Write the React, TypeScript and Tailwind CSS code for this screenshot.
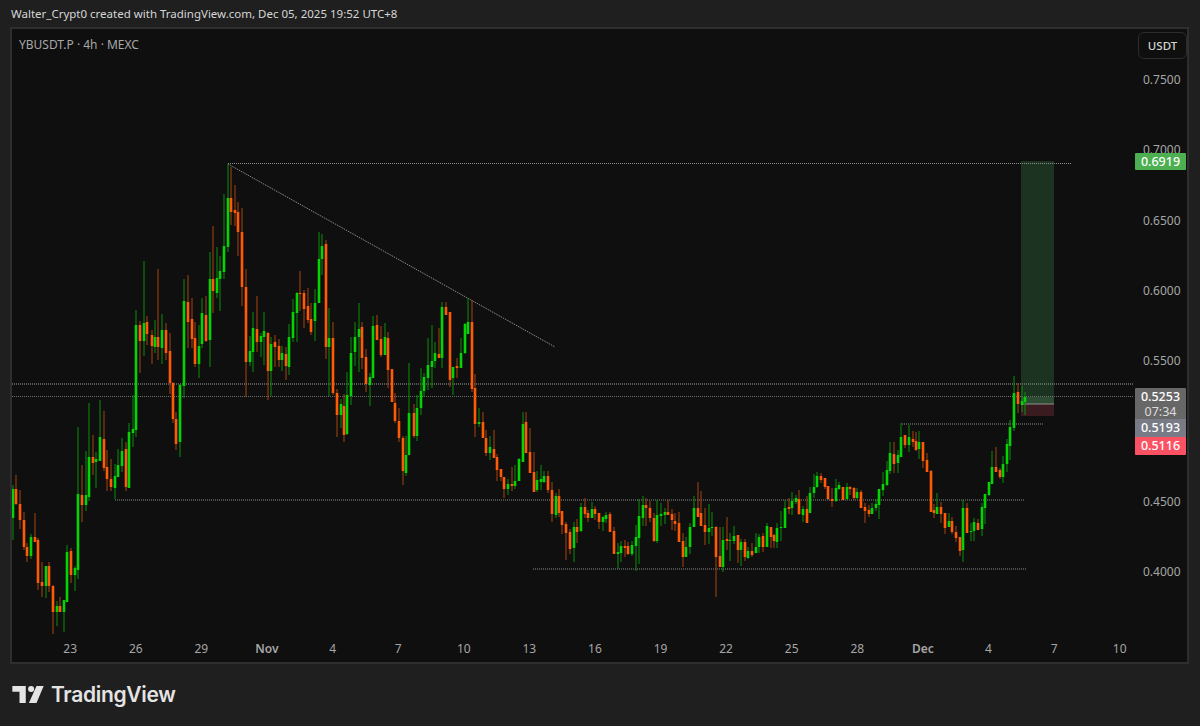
// Candles: [x, wick top, body top, body bottom, wick bottom, 1 = green / 0 = orange], all in page pixels
const candles: number[][] = [
  [13,485,489,518,540,1],[16,475,489,504,505,0],[20,490,504,520,529,0],[24,512,520,547,550,0],[27,543,547,556,562,0],[31,534,537,556,559,1],[35,513,537,542,542,0],[38,538,540,583,590,0],[42,562,582,586,597,0],[46,566,566,586,598,1],
  [49,562,566,586,592,0],[53,585,586,612,634,0],[57,601,606,612,626,1],[60,597,606,612,612,0],[64,600,600,612,632,1],[67,545,552,602,602,1],[71,548,551,575,583,0],[75,566,568,575,591,1],[78,427,494,570,579,1],[82,465,495,505,522,0],
  [86,451,495,505,511,1],[89,403,457,497,501,1],[93,435,457,463,475,0],[96,452,459,462,488,1],[100,400,437,461,461,1],[104,411,439,468,471,0],[107,450,467,479,491,0],[111,459,479,487,491,0],[115,464,476,488,499,1],[118,449,465,477,477,1],
  [122,438,451,466,472,1],[126,442,449,487,491,0],[129,423,432,488,488,1],[133,395,429,433,447,1],[136,310,325,430,437,1],[140,321,325,341,373,0],[144,261,323,341,356,1],[147,316,322,334,345,0],[152,330,335,346,364,0],[155,320,337,347,353,1],
  [158,269,337,347,360,0],[162,314,330,348,364,1],[166,323,330,353,360,0],[170,333,351,383,394,0],[173,382,383,419,423,0],[176,412,419,444,450,0],[180,384,385,442,457,1],[184,279,301,386,398,1],[188,275,302,322,348,0],[192,298,319,339,348,0],
  [195,322,338,364,367,0],[199,325,346,364,378,1],[202,298,313,344,348,1],[206,296,315,341,342,0],[210,252,279,340,367,1],[213,226,279,291,313,0],[217,247,278,293,298,1],[220,256,271,279,311,1],[224,194,246,272,279,1],[228,164,198,247,252,1],
  [231,167,198,212,225,0],[235,185,210,213,226,0],[238,202,212,232,256,0],[242,208,232,287,306,0],[246,269,287,362,397,0],[250,336,351,362,366,1],[253,312,328,352,372,1],[257,296,329,342,352,0],[261,333,336,342,357,1],[264,312,331,337,365,1],
  [268,332,333,371,400,0],[271,337,344,371,396,1],[275,335,342,347,367,0],[279,339,346,360,367,0],[282,346,353,360,371,1],[286,347,354,366,380,0],[289,324,337,367,375,1],[293,299,312,338,342,1],[297,292,293,313,342,1],[300,271,293,294,311,0],
  [304,290,293,309,328,0],[308,288,306,320,323,0],[311,303,319,332,335,0],[315,289,303,321,341,1],[319,232,259,303,303,1],[322,234,246,259,275,1],[326,240,244,347,359,0],[329,308,338,347,396,1],[333,322,338,393,395,0],[337,389,393,415,437,0],
  [341,399,404,415,428,1],[344,394,406,435,442,0],[347,372,395,434,435,1],[351,337,353,396,405,1],[355,322,337,352,366,1],[359,303,329,337,372,1],[362,322,327,358,369,0],[366,349,357,384,392,0],[370,373,377,385,406,1],[373,316,326,378,378,1],
  [377,315,325,340,340,0],[381,326,339,355,357,0],[385,323,337,355,355,1],[388,332,338,370,388,0],[392,369,369,402,402,0],[395,393,403,421,423,0],[399,408,421,438,442,0],[403,436,438,471,485,0],[406,436,455,473,476,1],[409,363,413,455,455,1],
  [414,404,413,436,438,0],[417,395,408,436,441,1],[421,368,391,408,415,1],[424,373,377,391,397,1],[428,338,365,378,390,1],[432,325,361,367,388,1],[435,342,353,361,368,1],[439,328,354,358,358,0],[442,302,307,358,368,1],[446,302,307,315,315,0],
  [450,312,312,380,387,0],[453,367,367,378,395,1],[457,358,366,368,378,0],[461,338,353,368,368,1],[465,323,324,353,354,1],[468,298,322,334,334,1],[472,300,322,389,392,0],[475,374,388,424,437,0],[479,408,422,424,427,1],[483,412,422,438,438,0],
  [486,430,438,453,456,0],[490,436,447,453,460,1],[494,430,449,458,458,0],[497,454,457,470,481,0],[501,469,469,477,481,0],[504,477,477,489,498,0],[508,479,484,489,495,1],[512,467,484,486,491,0],[515,465,481,486,489,1],[519,458,459,481,481,1],
  [523,412,424,462,462,1],[526,412,422,453,453,0],[530,428,452,473,473,0],[534,452,472,492,492,0],[537,471,480,490,492,1],[541,465,479,482,490,1],[544,471,476,482,483,1],[548,471,476,490,493,0],[552,482,490,514,522,0],[556,493,496,515,518,1],
  [559,489,496,513,517,0],[562,511,511,525,534,0],[566,522,524,533,560,0],[570,529,532,549,554,0],[574,522,527,548,562,1],[577,519,527,532,543,0],[581,503,507,531,532,1],[585,498,507,514,518,0],[588,510,513,518,522,0],[592,502,509,518,518,1],
  [595,506,509,514,520,0],[599,513,513,522,529,0],[603,516,517,522,531,1],[606,512,515,519,523,1],[610,512,514,532,532,0],[614,527,531,554,554,0],[618,543,552,554,569,1],[621,541,546,553,562,1],[625,540,546,548,557,0],[628,542,546,554,555,0],
  [632,541,545,554,556,1],[636,525,537,546,571,1],[639,499,516,538,564,1],[643,496,505,518,526,1],[646,498,505,508,526,0],[650,501,508,518,522,0],[654,513,518,541,542,0],[657,500,515,541,543,1],[661,503,514,516,526,1],[665,508,512,515,524,1],
  [668,500,512,515,515,0],[672,509,514,520,530,0],[675,513,521,524,531,0],[679,512,523,542,542,0],[683,533,541,557,567,0],[686,537,547,557,557,1],[690,523,527,547,554,1],[694,496,508,527,527,1],[698,482,508,517,517,0],[701,491,513,526,526,0],
  [705,508,525,532,545,0],[709,504,528,532,544,1],[712,512,527,528,536,1],[716,526,527,557,597,0],[720,527,556,567,567,0],[723,527,540,567,572,1],[727,517,539,541,550,0],[730,533,540,541,561,1],[734,526,536,541,544,1],[738,535,535,550,563,0],
  [741,539,542,550,566,1],[745,539,542,557,561,0],[748,547,551,558,559,1],[752,543,551,555,557,0],[756,533,547,553,553,1],[759,534,537,547,553,1],[763,533,536,547,552,0],[767,523,526,547,547,1],[771,527,527,537,548,0],[774,534,535,541,548,0],
  [777,523,528,542,548,1],[781,511,527,528,541,1],[785,500,508,528,528,1],[789,498,507,509,514,0],[792,492,501,508,515,1],[796,495,498,502,504,1],[799,490,499,514,515,0],[803,506,509,515,522,1],[807,496,509,523,523,0],[810,487,493,513,513,1],
  [814,474,487,493,498,1],[817,472,476,487,488,1],[821,473,476,480,483,0],[825,478,478,487,489,0],[828,486,486,499,500,0],[832,488,499,501,507,0],[836,479,488,501,502,1],[839,482,485,489,490,1],[843,487,487,500,500,0],[847,483,487,499,500,1],
  [850,486,487,489,495,0],[854,487,488,498,500,0],[857,488,492,498,499,1],[861,490,492,508,508,0],[865,503,507,511,523,0],[869,505,510,514,517,0],[872,503,508,514,514,1],[876,499,504,508,511,1],[879,489,489,505,519,1],[883,472,484,490,496,1],
  [887,461,470,485,486,1],[890,442,453,471,474,1],[894,442,454,464,473,0],[898,450,455,463,473,1],[901,423,437,457,457,1],[905,435,435,445,448,0],[909,425,437,445,452,1],[913,431,439,442,447,0],[916,432,441,450,451,0],[919,431,442,449,459,1],
  [923,442,442,461,468,0],[927,453,460,472,472,0],[931,470,471,512,512,0],[934,504,510,513,518,0],[937,493,507,514,514,1],[941,502,507,514,523,0],[945,513,513,528,534,0],[949,513,521,527,527,1],[952,517,521,532,534,0],[956,526,532,538,542,0],
  [960,537,537,551,556,0],[963,500,508,550,562,1],[967,503,508,533,533,0],[971,523,531,532,541,1],[974,518,522,531,541,1],[978,519,523,530,530,0],[982,503,507,529,536,1],[985,494,494,508,524,1],[989,482,482,495,496,1],[992,451,467,484,484,1],
  [996,447,467,472,472,0],[1000,468,470,477,479,0],[1003,456,464,477,483,1],[1007,439,444,464,472,1],[1010,420,427,446,460,1],[1014,376,393,428,431,1],[1018,383,392,404,413,0],[1022,386,401,405,412,1],[1025,392,397,402,415,1],
];

// Dotted drawing tools: x1, y1, x2, y2, dash colour
const lines: [number, number, number, number, string][] = [
  [12, 384, 1133, 384, "#a0a0a0"],
  [12, 396.5, 1133, 396.5, "#6e6e6e"],
  [228, 163.5, 1072, 163.5, "#8c8c8c"],
  [115, 500, 1025, 500, "#8c8c8c"],
  [533, 569, 1026, 569, "#8c8c8c"],
  [902, 424, 1043, 424, "#8c8c8c"],
];

// the 0.5000 row stays empty: the last-price badges cover it
const prices = ["0.7500", "0.7000", "0.6500", "0.6000", "0.5500", "", "0.4500", "0.4000"];
const ticks = ["23", "26", "29", "Nov", "4", "7", "10", "13", "16", "19", "22", "25", "28", "Dec", "4", "7", "10"];

function Chart() {
  return (
    <svg viewBox="12 29 1121 607" className="block w-[1121px] h-[607px] shrink-0">
      <rect x="1021" y="161" width="33" height="243" fill="#1b3320" />
      <rect x="1021" y="397" width="33" height="7" fill="#2d4c33" />
      <rect x="1021" y="404" width="33" height="12" fill="#3a1c20" />
      <rect x="1021" y="403.5" width="33" height="1" fill="#8d8d8d" />
      {lines.map(([x1, y1, x2, y2, c]) => (
        <line key={`${x1}-${y1}`} x1={x1} y1={y1} x2={x2} y2={y2} stroke={c} strokeWidth="1" strokeDasharray="1 1" />
      ))}
      <line x1="228" y1="164" x2="555" y2="347" stroke="#8c8c8c" strokeWidth="1" strokeDasharray="1.5 1" />
      {candles.map(([x, wt, bt, bb, wb, up]) => (
        <g key={x}>
          <rect x={x - 0.5} y={wt} width="1" height={wb - wt} fill={up ? "#0b8f0b" : "#a8440f"} />
          <rect x={x - 1.3} y={bt} width="2.6" height={Math.max(bb - bt, 1)} fill={up ? "#04d404" : "#ff5a06"} />
        </g>
      ))}
    </svg>
  );
}

function Logo() {
  return (
    <svg viewBox="0 0 35 19" className="w-[32px] h-[17px]" fill="#e4e4e4">
      <path d="M15 0H0v6.5h8V19h7V0Z" />
      <circle cx="21" cy="3.4" r="3.4" />
      <path d="M27 0h8l-8 19h-8.5L27 0Z" />
    </svg>
  );
}

export default function App() {
  return (
    <div className="relative w-[1200px] h-[726px] flex flex-col overflow-hidden bg-[#1f1f1f] font-['Noto_Sans',sans-serif]">
      <div className="h-[27px] pl-[11px] flex items-center text-[11.5px] text-[#d6d6d6]">
        Walter_Crypt0 created with TradingView.com, Dec 05, 2025 19:52 UTC+8
      </div>

      <div className="relative ml-[10px] w-[1179px] h-[637px] shrink-0 border-2 border-[#2e2e2e] bg-[#0f0f0f]">
        <div className="flex">
          <Chart />
          <div className="flex-1 flex flex-col pt-[16px] pl-[10px] text-[12px] text-[#a6a6a6]">
            {prices.map((p, i) => (
              <div key={i} className="h-[70.3px] shrink-0 leading-[70.3px]">
                {p}
              </div>
            ))}
          </div>
        </div>
        <div className="h-[26px] flex items-center pl-[25.4px] text-[12px] text-[#a6a6a6]">
          {ticks.map((t, i) => (
            <div
              key={i}
              className={`w-[65.6px] shrink-0 text-center ${t === "Nov" || t === "Dec" ? "font-semibold" : ""}`}
            >
              {t}
            </div>
          ))}
        </div>

        <div className="absolute left-[7px] top-[7px] text-[12px] text-[#a8a8a8]">YBUSDT.P · 4h · MEXC</div>
        <div className="absolute left-[1126px] top-[3px] w-[49px] h-[27px] flex items-center justify-center rounded-md border border-[#2c2c2c] text-[11.5px] font-medium text-[#d4d4d4]">
          USDT
        </div>

        <div className="absolute left-[1123px] top-[124px] w-[51px] h-[17px] flex items-center justify-center rounded-[1px] bg-[#4caf50] text-[12.5px] font-medium leading-[17px] text-white">
          0.6919
        </div>
        <div className="absolute left-[1123px] top-[359px] w-[51px] flex flex-col text-[12.5px] text-center rounded-[1px] overflow-hidden">
          <div className="h-[31px] bg-[#676767] flex flex-col leading-[15px] pt-[1px]">
            <span className="font-medium text-white">0.5253</span>
            <span className="text-[#dcdcdc]">07:34</span>
          </div>
          <div className="h-[18px] leading-[18px] bg-[#787b86] font-medium text-white">0.5193</div>
          <div className="h-[18px] leading-[18px] bg-[#fb5263] font-medium text-white">0.5116</div>
        </div>
      </div>

      <div className="flex-1 flex items-center gap-[7px] pl-[12px] pb-[1px]">
        <Logo />
        <span className="font-['Inter',sans-serif] text-[21px] font-semibold tracking-[-0.3px] text-[#e4e4e4]">TradingView</span>
      </div>
    </div>
  );
}
